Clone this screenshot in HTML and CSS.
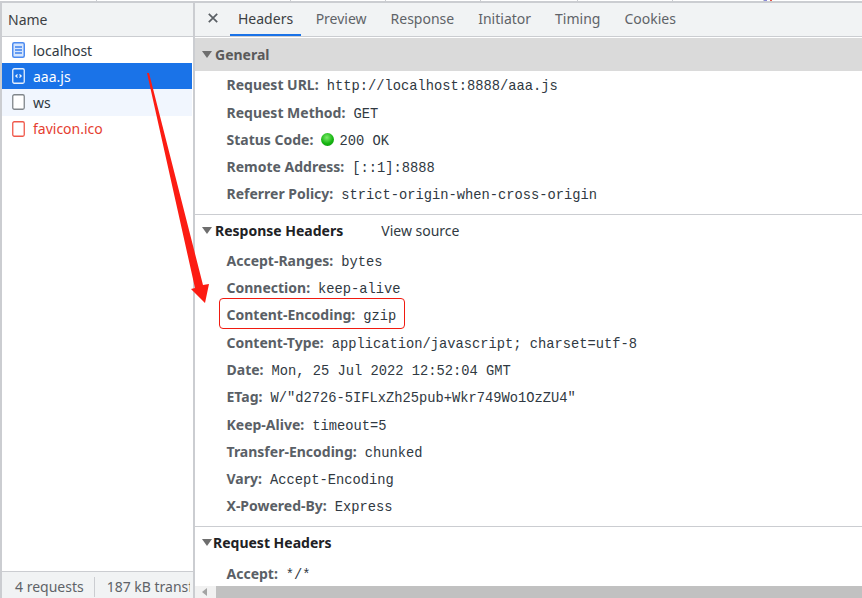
FILE: index.html
```html
<!DOCTYPE html>
<html lang="en">
<head>
<meta charset="utf-8">
<title>Network</title>
<link rel="stylesheet" href="styles.css">
</head>
<body>
<div class="topstrip">
  <i class="col c1"></i><i class="col c2"></i><i class="col c3"></i><i class="col c3"></i><i class="col c4"></i><i class="col c3"></i><i class="col c5"></i><i class="blip"></i>
</div>
<div class="main">
  <aside class="files">
    <div class="files-head">Name</div>
    <ul class="file-list">
      <li class="file">
        <svg class="ficon" width="13" height="16" viewBox="0 0 13 16"><rect x="0.75" y="0.75" width="11.5" height="14.5" rx="1.5" fill="#d6e6fd" stroke="#4d8bf0" stroke-width="1.5"/><path d="M3 5h7M3 8h7M3 11h7" stroke="#3f83ee" stroke-width="1.4"/></svg>
        <span>localhost</span>
      </li>
      <li class="file selected">
        <svg class="ficon" width="13" height="16" viewBox="0 0 13 16"><rect x="0.75" y="0.75" width="11.5" height="14.5" rx="1.5" fill="#1a73e8" stroke="#e6effc" stroke-width="1.3"/><path d="M5.5 6.5 3.8 8l1.7 1.5M7.5 6.5 9.2 8 7.5 9.5" fill="none" stroke="#fff" stroke-width="1.1"/></svg>
        <span>aaa.js</span>
      </li>
      <li class="file even">
        <svg class="ficon" width="13" height="16" viewBox="0 0 13 16"><rect x="0.75" y="0.75" width="11.5" height="14.5" rx="1.5" fill="#fff" stroke="#80868b" stroke-width="1.3"/></svg>
        <span>ws</span>
      </li>
      <li class="file failed">
        <svg class="ficon" width="13" height="16" viewBox="0 0 13 16"><rect x="0.75" y="0.75" width="11.5" height="14.5" rx="1.5" fill="#fff" stroke="#f0584a" stroke-width="1.3"/></svg>
        <span>favicon.ico</span>
      </li>
    </ul>
    <div class="files-foot"><span class="foot-a">4 requests</span><span class="foot-b">187 kB transferred</span></div>
  </aside>
  <section class="detail">
    <nav class="tabs">
      <span class="close"><svg width="10" height="10" viewBox="0 0 10 10"><path d="M0.8 0.8 9.2 9.2M9.2 0.8 0.8 9.2" stroke="#5a5f64" stroke-width="1.7"/></svg></span>
      <span class="tab active">Headers</span>
      <span class="tab">Preview</span>
      <span class="tab">Response</span>
      <span class="tab">Initiator</span>
      <span class="tab">Timing</span>
      <span class="tab">Cookies</span>
    </nav>
    <div class="scroll">
      <div class="sec-title general"><i class="tri"></i>General</div>
      <div class="rows">
        <div class="row"><b>Request URL:</b><code>http://localhost:8888/aaa.js</code></div>
        <div class="row"><b>Request Method:</b><code>GET</code></div>
        <div class="row"><b>Status Code:</b><i class="dot"></i><code class="status">200 OK</code></div>
        <div class="row"><b>Remote Address:</b><code>[::1]:8888</code></div>
        <div class="row"><b>Referrer Policy:</b><code>strict-origin-when-cross-origin</code></div>
      </div>
      <div class="sec-title response"><i class="tri"></i>Response Headers<span class="source">View source</span></div>
      <div class="rows">
        <div class="row"><b>Accept-Ranges:</b><code>bytes</code></div>
        <div class="row"><b>Connection:</b><code>keep-alive</code></div>
        <div class="row"><b>Content-Encoding:</b><code>gzip</code></div>
        <div class="row"><b>Content-Type:</b><code>application/javascript; charset=utf-8</code></div>
        <div class="row"><b>Date:</b><code>Mon, 25 Jul 2022 12:52:04 GMT</code></div>
        <div class="row"><b>ETag:</b><code>W/"d2726-5IFLxZh25pub+Wkr749Wo1OzZU4"</code></div>
        <div class="row"><b>Keep-Alive:</b><code>timeout=5</code></div>
        <div class="row"><b>Transfer-Encoding:</b><code>chunked</code></div>
        <div class="row"><b>Vary:</b><code>Accept-Encoding</code></div>
        <div class="row"><b>X-Powered-By:</b><code>Express</code></div>
      </div>
      <div class="sec-title request"><i class="tri"></i>Request Headers</div>
      <div class="rows">
        <div class="row"><b>Accept:</b><code>*/*</code></div>
      </div>
    </div>
    <div class="hscroll"><i class="arrow-left"></i><div class="thumb"></div></div>
  </section>
</div>
<div class="redbox"></div>
<svg class="arrow" width="862" height="598" viewBox="0 0 862 598"><polygon points="147,73 149,73 203,285 209,284 205,303 191,289 195,288" fill="#fc1c13"/></svg>
</body>
</html>
```
FILE: styles.css
```css
* { box-sizing: border-box; }
html, body { margin: 0; height: 100%; overflow: hidden; }
body {
  width: 862px;
  height: 598px;
  display: flex;
  flex-direction: column;
  background: #fff;
  color: #303942;
  font-family: "Noto Sans", "Open Sans", sans-serif;
  font-size: 14px;
}
.topstrip {
  height: 3px;
  flex: none;
  display: flex;
  border-bottom: 2px solid #cbcdd1;
}
.col { height: 1px; flex: none; border-right: 1px solid #cbcdd1; }
.c1 { width: 97px; }
.c2 { width: 194px; }
.c3 { width: 95px; }
.c4 { width: 97px; }
.c5 { width: 91px; }
.blip { width: 8px; height: 1px; background: linear-gradient(90deg, #8a8ad8 0 40%, transparent 40% 70%, #e5564a 70%); }
.main { flex: 1; display: flex; min-height: 0; }
.files {
  width: 195px;
  flex: none;
  display: flex;
  flex-direction: column;
  border-left: 2px solid #cbcdd1;
  border-right: 2px solid #cbcdd1;
}
.files-head {
  height: 34px;
  flex: none;
  padding-left: 6px;
  line-height: 33px;
  background: #f1f3f4;
  border-bottom: 1px solid #cbcdd1;
  color: #3c4043;
}
.file-list { flex: 1; margin: 0; padding: 0 1px 0 0; list-style: none; }
.file {
  height: 26.2px;
  display: flex;
  align-items: center;
  gap: 8px;
  padding-left: 10px;
  color: #303942;
}
.ficon { flex: none; }
.selected { background: #1a73e8; color: #fff; }
.even { background: #f1f6fe; }
.failed { color: #e53e30; }
.files-foot {
  height: 27px;
  flex: none;
  display: flex;
  align-items: center;
  padding-top: 3px;
  white-space: nowrap;
  background: #f1f3f4;
  border-top: 1px solid #cbcdd1;
  color: #5f6368;
}
.foot-a { flex: none; padding: 0 10px 0 13px; border-right: 1px solid #cbcdd1; line-height: 20px; }
.foot-b { flex: 1; min-width: 0; margin: 0 3px 0 12px; overflow: hidden; }
.detail { flex: 1; min-width: 0; display: flex; flex-direction: column; }
.tabs {
  height: 34px;
  flex: none;
  display: flex;
  align-items: stretch;
  background: #f1f3f4;
  border-bottom: 1px solid #cbcdd1;
  color: #5f6368;
}
.close { width: 35px; display: flex; align-items: center; justify-content: center; padding: 0 0 3px 0; }
.tab { padding: 0 8px; margin-right: 8px; line-height: 32px; white-space: nowrap; }
.tab.active { color: #3c4043; box-shadow: inset 0 -2px 0 #1a73e8; margin-right: 6.5px; }
.scroll { flex: 1; min-height: 0; overflow: hidden; }
.sec-title {
  display: flex;
  align-items: center;
  font-weight: 700;
  white-space: nowrap;
  color: #202124;
}
.general { height: 33px; margin-top: 1px; background: #dadada; color: #5a5a5a; padding-left: 7px; }
.response { height: 32px; border-top: 1px solid #cbcdd1; padding-left: 7px; }
.request { height: 33px; border-top: 1px solid #cbcdd1; padding: 0 0 1px 7px; }
.tri {
  width: 0;
  height: 0;
  margin-right: 3px;
  border-left: 5px solid transparent;
  border-right: 5px solid transparent;
  border-top: 7px solid #6e6e6e;
}
.request .tri { margin-right: 1px; }
.source { margin-left: 38px; font-weight: 400; color: #303942; }
.rows { padding: 0 0 7px 31.5px; }
.row {
  height: 27.3px;
  display: flex;
  align-items: baseline;
  padding-top: 4.3px;
  white-space: nowrap;
}
.row b { color: #5a5f66; font-weight: 700; margin-right: 8px; }
.row code { font-family: "Liberation Mono", monospace; font-size: 13.75px; color: #303942; }
.dot {
  align-self: center;
  width: 13px;
  height: 13px;
  margin: 0 5px 3px 0;
  border-radius: 50%;
  background: radial-gradient(circle at 45% 35%, #7dec6a, #16b512 55%, #0c8f0c);
}
.hscroll {
  height: 12px;
  flex: none;
  display: flex;
  align-items: center;
  background: #f1f1f1;
}
.arrow-left {
  margin-left: 7px;
  border-top: 4px solid transparent;
  border-bottom: 4px solid transparent;
  border-right: 5px solid #a3a3a3;
}
.thumb { height: 12px; flex: 1; margin-left: 9px; background: #c1c1c1; }
.redbox {
  position: absolute;
  left: 219px;
  top: 298px;
  width: 186px;
  height: 31px;
  border: 1px solid #f01a10;
  border-radius: 4px;
}
.arrow { position: absolute; left: 0; top: 0; pointer-events: none; }
```
